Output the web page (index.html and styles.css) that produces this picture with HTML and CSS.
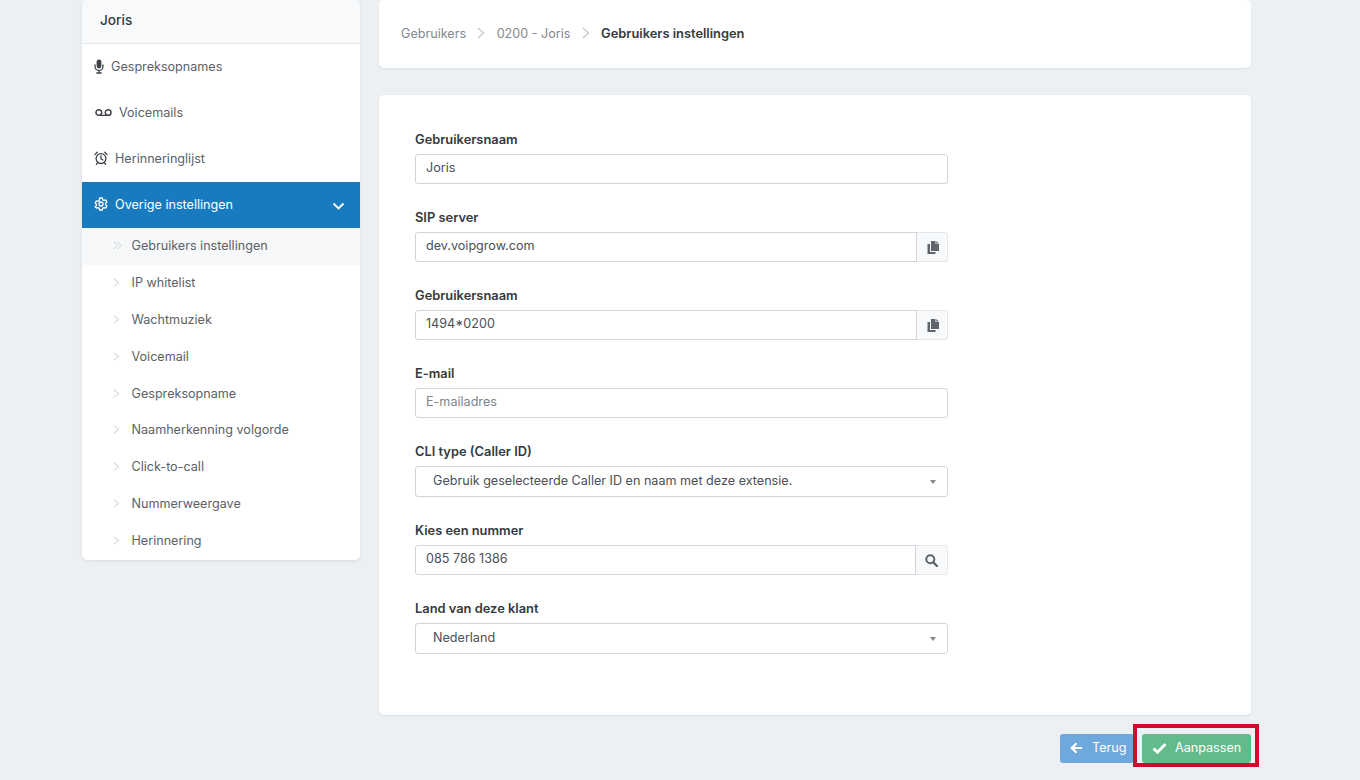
FILE: index.html
```html
<!DOCTYPE html>
<html lang="nl">
<head>
<meta charset="utf-8">
<title>Gebruikers instellingen</title>
<link rel="stylesheet" href="styles.css">
</head>
<body>
<div class="layout">
  <aside class="sidebar">
    <div class="sidebar-title">Joris</div>
    <nav>
      <a class="nav-item">
        <svg class="ic ic-mic" viewBox="0 0 10 15"><rect x="2.600" y="0.500" width="4.800" height="9" rx="2.400" fill="currentColor"/><path d="M1 6v1.400a4 4 0 0 0 8 0V6M5 11.400V14M2.800 14h4.400" fill="none" stroke="currentColor" stroke-width="1.300" stroke-linecap="round"/></svg>
        <span>Gespreksopnames</span>
      </a>
      <a class="nav-item">
        <svg class="ic ic-vm" viewBox="0 0 16 8"><circle cx="3.600" cy="4" r="2.700" fill="none" stroke="currentColor" stroke-width="1.400"/><circle cx="12.400" cy="4" r="2.700" fill="none" stroke="currentColor" stroke-width="1.400"/><path d="M3.600 6.700h8.800" stroke="currentColor" stroke-width="1.400"/></svg>
        <span>Voicemails</span>
      </a>
      <a class="nav-item">
        <svg class="ic ic-alarm" viewBox="0 0 14 14"><circle cx="7" cy="7.600" r="4.900" fill="none" stroke="currentColor" stroke-width="1.300"/><path d="M7 4.800v3l1.900 1.200M0.900 3.600 3.200 1.200M13.100 3.600 10.800 1.200M3.400 12l-1 1.300M10.600 12l1 1.300" fill="none" stroke="currentColor" stroke-width="1.300" stroke-linecap="round"/></svg>
        <span>Herinneringlijst</span>
      </a>
      <a class="nav-item is-open">
        <svg class="ic ic-gear" viewBox="0 0 14 14"><path d="M5.700 1h2.600l.4 1.700 1.200.7 1.700-.5 1.300 2.200-1.300 1.200v1.400l1.300 1.200-1.300 2.200-1.700-.5-1.200.7-.4 1.700H5.700l-.4-1.700-1.200-.7-1.700.5L1.100 9.900l1.300-1.200V7.300L1.100 6.100 2.400 3.900l1.700.5 1.200-.7z" fill="none" stroke="currentColor" stroke-width="1.300" stroke-linejoin="round"/><circle cx="7" cy="7" r="2" fill="none" stroke="currentColor" stroke-width="1.300"/></svg>
        <span>Overige instellingen</span>
        <svg class="caret" viewBox="0 0 12 8"><path d="M1 1.500 6 6.500 11 1.500" fill="none" stroke="currentColor" stroke-width="1.800"/></svg>
      </a>
      <ul class="subnav">
        <li class="sub-item is-current"><svg class="sub-ic" viewBox="0 0 10 10"><path d="M1 1l4 4-4 4M5 1l4 4-4 4" fill="none" stroke="currentColor"/></svg><span>Gebruikers instellingen</span></li>
        <li class="sub-item"><svg class="sub-ic" viewBox="0 0 10 10"><path d="M1 1l5.500 4-5.500 4" fill="none" stroke="currentColor"/></svg><span>IP whitelist</span></li>
        <li class="sub-item"><svg class="sub-ic" viewBox="0 0 10 10"><path d="M1 1l5.500 4-5.500 4" fill="none" stroke="currentColor"/></svg><span>Wachtmuziek</span></li>
        <li class="sub-item"><svg class="sub-ic" viewBox="0 0 10 10"><path d="M1 1l5.500 4-5.500 4" fill="none" stroke="currentColor"/></svg><span>Voicemail</span></li>
        <li class="sub-item"><svg class="sub-ic" viewBox="0 0 10 10"><path d="M1 1l5.500 4-5.500 4" fill="none" stroke="currentColor"/></svg><span>Gespreksopname</span></li>
        <li class="sub-item"><svg class="sub-ic" viewBox="0 0 10 10"><path d="M1 1l5.500 4-5.500 4" fill="none" stroke="currentColor"/></svg><span>Naamherkenning volgorde</span></li>
        <li class="sub-item"><svg class="sub-ic" viewBox="0 0 10 10"><path d="M1 1l5.500 4-5.500 4" fill="none" stroke="currentColor"/></svg><span>Click-to-call</span></li>
        <li class="sub-item"><svg class="sub-ic" viewBox="0 0 10 10"><path d="M1 1l5.500 4-5.500 4" fill="none" stroke="currentColor"/></svg><span>Nummerweergave</span></li>
        <li class="sub-item"><svg class="sub-ic" viewBox="0 0 10 10"><path d="M1 1l5.500 4-5.500 4" fill="none" stroke="currentColor"/></svg><span>Herinnering</span></li>
      </ul>
    </nav>
  </aside>

  <main class="content">
    <div class="card crumbs">
      <span class="crumb">Gebruikers</span>
      <svg class="crumb-sep" viewBox="0 0 8 12"><path d="M1 1l5.500 5L1 11" fill="none" stroke="currentColor" stroke-width="1.100"/></svg>
      <span class="crumb">0200 - Joris</span>
      <svg class="crumb-sep" viewBox="0 0 8 12"><path d="M1 1l5.500 5L1 11" fill="none" stroke="currentColor" stroke-width="1.100"/></svg>
      <strong class="crumb-current">Gebruikers instellingen</strong>
    </div>

    <form class="card form">
      <div class="field">
        <label class="label">Gebruikersnaam</label>
        <div class="control">Joris</div>
      </div>
      <div class="field">
        <label class="label">SIP server</label>
        <div class="group">
          <div class="control">dev.voipgrow.com</div>
          <span class="addon addon-copy"><svg class="copy" viewBox="0 0 12 13"><path d="M4 0h4.500v3H12v7H4z" fill="currentColor"/><path d="M9.300 0 12 2.400H9.300z" fill="currentColor"/><path d="M3 3H0.500v10H8.500v-2H3z" fill="currentColor"/></svg></span>
        </div>
      </div>
      <div class="field">
        <label class="label">Gebruikersnaam</label>
        <div class="group">
          <div class="control">1494*0200</div>
          <span class="addon addon-copy"><svg class="copy" viewBox="0 0 12 13"><path d="M4 0h4.500v3H12v7H4z" fill="currentColor"/><path d="M9.300 0 12 2.400H9.300z" fill="currentColor"/><path d="M3 3H0.500v10H8.500v-2H3z" fill="currentColor"/></svg></span>
        </div>
      </div>
      <div class="field">
        <label class="label">E-mail</label>
        <div class="control is-placeholder">E-mailadres</div>
      </div>
      <div class="field">
        <label class="label">CLI type (Caller ID)</label>
        <div class="control select">Gebruik geselecteerde Caller ID en naam met deze extensie.</div>
      </div>
      <div class="field">
        <label class="label">Kies een nummer</label>
        <div class="group">
          <div class="control">085 786 1386</div>
          <span class="addon addon-wide"><svg class="search" viewBox="0 0 13 13"><circle cx="5.300" cy="5.300" r="4" fill="none" stroke="currentColor" stroke-width="2"/><path d="M8.300 8.300 12 12" stroke="currentColor" stroke-width="2.400" stroke-linecap="round"/></svg></span>
        </div>
      </div>
      <div class="field">
        <label class="label">Land van deze klant</label>
        <div class="control select">Nederland</div>
      </div>
    </form>

    <div class="actions">
      <button class="btn btn-back" type="button">
        <svg class="btn-ic" viewBox="0 0 13 12"><path d="M12 6H2M6.500 1.200 1.700 6l4.800 4.800" fill="none" stroke="currentColor" stroke-width="2.200"/></svg>
        Terug
      </button>
      <span class="save-wrap">
        <button class="btn btn-save" type="button">
          <svg class="btn-ic btn-ic-check" viewBox="0 0 15 12"><path d="M1.500 6.500 5.500 10.300 13.500 2" fill="none" stroke="currentColor" stroke-width="2.800"/></svg>
          Aanpassen
        </button>
        <span class="highlight"></span>
      </span>
    </div>
  </main>
</div>
</body>
</html>
```
FILE: styles.css
```css
* { box-sizing: border-box; }

html, body {
  margin: 0;
  height: 780px;
  overflow: hidden;
}

body {
  background: #ecf0f3;
  color: #495057;
  font-family: Inter, "Liberation Sans", sans-serif;
  font-size: 12.6px;
}

.layout {
  display: flex;
  align-items: flex-start;
  gap: 19px;
  padding-left: 82px;
}

/* Sidebar */
.sidebar {
  width: 278px;
  height: 560px;
  background: #fff;
  border-radius: 5px;
  box-shadow: 0 1px 3px rgba(60, 80, 100, .12);
  overflow: hidden;
}

.sidebar-title {
  height: 44px;
  padding: 11px 18px;
  background: #f8f9fa;
  border-bottom: 1px solid #e3e7ea;
  color: #343a40;
  font-size: 13.6px;
  font-weight: 500;
  line-height: 18px;
}

.nav-item {
  display: flex;
  align-items: center;
  gap: 7px;
  height: 46px;
  padding: 0 12px 2px;
  color: #5a6168;
}

.nav-item.is-open {
  background: #197bbf;
  color: #fff;
}

.ic { flex: none; color: #3d4349; }
.is-open .ic { color: #fff; }
.ic-mic { width: 10px; height: 15px; }
.ic-vm { width: 17px; height: 9px; margin-left: 1px; }
.ic-alarm { width: 14px; height: 14px; }
.ic-gear { width: 14px; height: 14px; }

.caret {
  width: 13px;
  height: 8px;
  margin-top: 3px;
  margin-left: auto;
  margin-right: 3px;
  color: #fff;
}

.subnav {
  list-style: none;
  margin: 0;
  padding: 0;
}

.sub-item {
  display: flex;
  align-items: center;
  gap: 10px;
  height: 36.920px;
  padding: 0 0 2px 30.500px;
  color: #5a6168;
}

.sub-item.is-current { background: #f6f8f9; }

.sub-ic {
  width: 9px;
  height: 9px;
  color: #c4c9cd;
}

/* Main column */
.content {
  width: 872px;
  display: flex;
  flex-direction: column;
}

.card {
  background: #fff;
  border-radius: 5px;
  box-shadow: 0 1px 2px rgba(60, 80, 100, .1);
}

.crumbs {
  display: flex;
  align-items: center;
  height: 68px;
  padding: 0 22px 2px;
  color: #83898f;
}

.crumb-sep {
  width: 8px;
  height: 12px;
  margin: 0 11.300px;
  color: #c0c4c8;
}

.crumb-current {
  color: #343a40;
  font-size: 12.870px;
  font-weight: 600;
}

.form {
  margin-top: 27px;
  height: 620px;
  padding: 36px 36px 0;
}

.field {
  width: 533px;
  margin-bottom: 25px;
}

.label {
  display: block;
  height: 16px;
  margin-bottom: 7px;
  color: #343a40;
  font-size: 12.870px;
  font-weight: 600;
  line-height: 18px;
}

.control {
  flex: 1;
  height: 30px;
  padding: 0 10px;
  background: #fff;
  border: 1px solid #ced4da;
  border-radius: 3px;
  color: #495057;
  line-height: 26px;
}

.control.is-placeholder { color: #7d848b; }

.control.select {
  position: relative;
  height: 31px;
  padding-left: 17px;
  line-height: 27px;
}

/* Dropdown arrow */
.control.select::after {
  content: "";
  position: absolute;
  top: 13px;
  right: 11px;
  border: 3.500px solid transparent;
  border-top: 4px solid #888;
  border-bottom: 0;
}

.group { display: flex; }

.group .control {
  border-radius: 3px 0 0 3px;
}

.addon {
  display: flex;
  flex: none;
  align-items: center;
  justify-content: center;
  width: 32px;
  height: 30px;
  margin-left: -1px;
  background: #f8f9fa;
  border: 1px solid #e4e7ea;
  border-left-color: #ced4da;
  border-radius: 0 3px 3px 0;
  color: #5f656c;
}

.addon-copy { padding-left: 1px; }
.addon-wide { width: 33px; }
.copy { width: 12px; height: 13px; }
.search { width: 13px; height: 13px; }

/* Footer buttons */
.actions {
  display: flex;
  justify-content: flex-end;
  gap: 8px;
  margin-top: 19px;
}

.btn {
  display: flex;
  align-items: center;
  height: 29px;
  padding-bottom: 3px;
  border: 0;
  border-radius: 3px;
  color: #fff;
  font: 400 12.6px Inter, "Liberation Sans", sans-serif;
}

.btn-back {
  width: 74px;
  padding-left: 10px;
  padding-right: 0;
  gap: 9px;
  background: #6fa8dc;
}

.btn-save {
  width: 109px;
  padding-left: 10px;
  padding-right: 0;
  gap: 8px;
  background: #63bb8b;
}

.btn-ic { width: 13px; height: 12px; }
.btn-ic-check { width: 15px; }

.save-wrap { position: relative; }

/* Red marker drawn around the save button */
.highlight {
  position: absolute;
  inset: -10px -8px -4px -9px;
  border: 4px solid #d20a2e;
  pointer-events: none;
}
```
